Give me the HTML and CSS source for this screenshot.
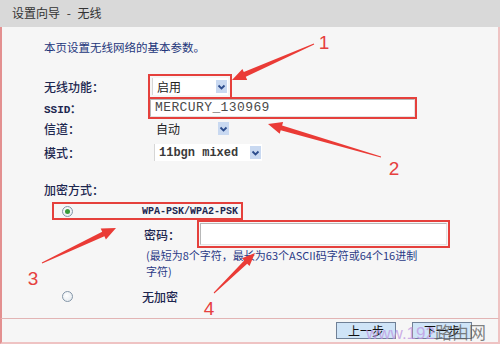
FILE: index.html
```html
<!DOCTYPE html>
<html lang="zh-CN">

<head>
    <meta charset="UTF-8">
    <meta name="viewport" content="width=device-width, initial-scale=1.0">
    <title>设置向导 - 无线</title>
    <link rel="stylesheet" href="styles.css">
</head>

<body>
    <div class="page">
        <div class="titlebar">设置向导 - 无线</div>

        <div class="panel">
            <p class="intro">本页设置无线网络的基本参数。</p>

            <div class="row">
                <span class="label">无线功能：</span>
                <div class="select marked w-switch">
                    <span>启用</span>
                    <i class="drop"><svg width="11" height="12" viewBox="0 0 11 12"><polyline points="2.5,4.5 5.5,7.5 8.5,4.5" /></svg></i>
                </div>
            </div>
            <div class="row">
                <span class="label mono-label">SSID：</span>
                <div class="textbox ssid marked">MERCURY_130969</div>
            </div>
            <div class="row">
                <span class="label">信道：</span>
                <div class="select w-channel">
                    <span>自动</span>
                    <i class="drop"><svg width="11" height="12" viewBox="0 0 11 12"><polyline points="2.5,4.5 5.5,7.5 8.5,4.5" /></svg></i>
                </div>
            </div>
            <div class="row row-mode">
                <span class="label">模式：</span>
                <div class="select w-mode">
                    <span class="mode-value">11bgn mixed</span>
                    <i class="drop"><svg width="11" height="12" viewBox="0 0 11 12"><polyline points="2.5,4.5 5.5,7.5 8.5,4.5" /></svg></i>
                </div>
            </div>

            <p class="section">加密方式：</p>

            <div class="option boxed">
                <span class="radio-cell"><span class="radio checked"></span></span>
                <span class="wpa">WPA-PSK/WPA2-PSK</span>
            </div>
            <div class="sub">
                <div class="pwd-row">
                    <span class="pwd-label">密码：</span>
                    <div class="textbox pwd marked"></div>
                </div>
                <p class="note">(最短为8个字符，最长为63个ASCII码字符或64个16进制<br>字符)</p>
            </div>
            <div class="option">
                <span class="radio-cell"><span class="radio"></span></span>
                <span class="plain">无加密</span>
            </div>
        </div>

        <div class="footer">
            <button class="btn">上一步</button>
            <button class="btn">下一步</button>
        </div>

        <span class="watermark"><span class="wm-url">www.192</span><span class="wm-cn">路由网</span></span>

        <svg class="notes" width="500" height="346" viewBox="0 0 500 346">
            <polygon points="313.8,43.5 243.8,72.1 242.4,68.9 232,80 247.2,79.9 245.8,76.7 314.2,44.5" />
            <polygon points="381.1,156.5 282.1,125.5 283.1,122.1 268,124 279.7,133.7 280.7,130.3 380.9,157.5" />
            <polygon points="41.8,262.5 102.2,231.7 100.7,228.6 116,228 105.9,239.4 104.4,236.3 42.2,263.5" />
            <polygon points="213.7,292.6 244.2,260.5 241.9,258.2 255,253 249.5,266 247.2,263.7 214.3,293.4" />
            <text x="324" y="49">1</text>
            <text x="394" y="175">2</text>
            <text x="33" y="285">3</text>
            <text x="209" y="315">4</text>
        </svg>
    </div>
</body>

</html>
```

FILE: styles.css
```css
body {
    margin: 0;
    background-color: #ffffff;
    font-family: "Noto Sans CJK SC", "Liberation Sans", sans-serif;
    font-size: 12px;
}

.page {
    position: relative;
    width: 500px;
    height: 346px;
    overflow: hidden;
}

.titlebar {
    height: 27px;
    line-height: 26px;
    padding-left: 12px;
    background-color: #d9d9d9;
    color: #333;
    font-size: 12px;
    word-spacing: 4px;
}

.panel {
    height: 291px;
    box-sizing: border-box;
    padding: 12px 0 0 42px;
    background-color: #f6f6f6;
    border-left: 2px solid #e39090;
    border-right: 2px solid #efc3c3;
}

.intro {
    margin: 0 0 21px;
    line-height: 16px;
    font-size: 11.5px;
    color: #23357a;
}

.row {
    display: flex;
    align-items: center;
    height: 21px;
}

.row-mode {
    margin-top: 3px;
}

.label {
    width: 106px;
    color: #1d2750;
    font-size: 12px;
    font-weight: 500;
}

.mono-label {
    font-family: "Liberation Mono", monospace;
    font-weight: bold;
    font-size: 11px;
}

.select {
    display: flex;
    align-items: center;
    justify-content: space-between;
    height: 17px;
    margin-left: 2px;
    padding: 0 0 0 4px;
    background-color: #ffffff;
    border-left: 1px solid #d6d6d6;
    color: #222;
    font-size: 12px;
    box-sizing: border-box;
}

.w-switch { width: 76px; }
.w-channel { width: 78px; background-color: transparent; border-left: none; }
.w-mode { width: 108px; margin-left: 4px; }

.mode-value {
    font-family: "Liberation Mono", monospace;
    font-weight: bold;
    font-size: 12px;
    color: #3a3a3a;
}

.drop {
    display: flex;
    width: 11px;
    height: 13px;
    margin-right: 1px;
    background-color: #c9d9f1;
    align-items: center;
    justify-content: center;
}

.drop polyline {
    fill: none;
    stroke: #2c4c8c;
    stroke-width: 1.8;
}

.marked {
    outline: 2px solid #e5403c;
    outline-offset: 2px;
}

.textbox {
    height: 18px;
    box-sizing: border-box;
    background-color: #ffffff;
    border: 1px solid #b8b8b8;
    border-right-color: #e4e4e4;
    border-bottom-color: #e4e4e4;
}

.ssid {
    width: 265px;
    padding-left: 4px;
    line-height: 16px;
    outline-offset: 0;
    font-family: "Liberation Mono", monospace;
    font-size: 13px;
    letter-spacing: 0.4px;
    color: #4a4a4a;
}

.section {
    margin: 19px 0 0;
    line-height: 16px;
    color: #1d2750;
    font-weight: 500;
}

.option {
    display: flex;
    align-items: center;
    width: 191px;
    height: 18px;
    margin: 4px 0 0 8px;
    box-sizing: border-box;
    border: 2px solid transparent;
}

.option.boxed {
    border-color: #e5403c;
}

.option:last-child {
    margin-top: 8px;
}

.radio-cell {
    display: flex;
    width: 88px;
    padding-left: 8px;
    box-sizing: border-box;
}

.radio {
    position: relative;
    width: 11px;
    height: 11px;
    box-sizing: border-box;
    border: 1px solid #8496a8;
    border-radius: 50%;
    background: radial-gradient(circle at 40% 40%, #ffffff, #dfe6ec);
}

.radio.checked::after {
    content: "";
    position: absolute;
    top: 2px;
    left: 2px;
    width: 5px;
    height: 5px;
    border-radius: 50%;
    background-color: #3a9c3a;
}

.wpa {
    font-family: "Liberation Mono", monospace;
    font-weight: bold;
    font-size: 10px;
    color: #1d2750;
    white-space: nowrap;
}

.plain {
    color: #1d2750;
    font-weight: 500;
}

.sub {
    margin-left: 100px;
}

.pwd-row {
    display: flex;
    align-items: center;
    margin-top: 3px;
}

.pwd-label {
    width: 56px;
    color: #1d2750;
    font-weight: 500;
}

.pwd {
    width: 247px;
    height: 22px;
    outline-offset: 1px;
}

.note {
    margin: 2px 0 0 2px;
    line-height: 16px;
    font-size: 11px;
    color: #2a3a86;
}

.footer {
    display: flex;
    justify-content: flex-end;
    align-items: center;
    gap: 16px;
    height: 26px;
    padding-right: 26px;
    box-sizing: border-box;
    background-color: #f6f6f6;
    border: 2px solid #efc3c3;
    border-left-color: #e39090;
    border-top: 1px solid #e2b4b4;
}

.btn {
    width: 60px;
    height: 17px;
    padding: 0;
    background-color: #cfe4f7;
    border: 1px solid #6f8096;
    font-family: "Noto Sans CJK SC", sans-serif;
    font-size: 12px;
    line-height: 15px;
    color: #111;
}

.watermark {
    position: absolute;
    left: 366px;
    top: 321px;
    font-size: 17px;
    line-height: 22px;
    white-space: nowrap;
    pointer-events: none;
}

.wm-url {
    font-family: "Liberation Sans", sans-serif;
    color: rgba(190, 150, 225, 0.75);
}

.wm-cn {
    color: rgba(90, 90, 90, 0.75);
    font-family: "Noto Sans CJK SC", sans-serif;
}

.notes {
    position: absolute;
    top: 0;
    left: 0;
    pointer-events: none;
}

.notes polygon {
    fill: #ea3b36;
}

.notes text {
    fill: #e6403e;
    font-family: "Liberation Sans", sans-serif;
    font-size: 19px;
    text-anchor: middle;
}
```
